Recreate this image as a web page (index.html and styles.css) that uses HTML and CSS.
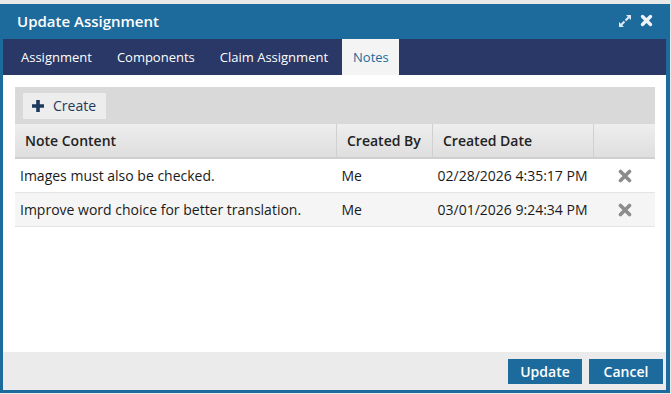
FILE: index.html
```html
<!DOCTYPE html>
<html>
  <head>
    <meta charset="utf-8">
    <title>Update Assignment</title>
    <link rel="stylesheet" href="styles.css">
  </head>
  <body>
    <div class="dialog">
      <div class="titlebar">
        <span class="title">Update Assignment</span>
        <span class="actions">
          <svg class="maximize" width="14" height="14" viewBox="0 0 14 14">
            <path d="M8 1h5v5l-1.8-1.8-3 3-1.4-1.4 3-3z M6 13H1V8l1.8 1.8 3-3 1.4 1.4-3 3z" fill="#dfe9f2"/>
          </svg>
          <svg class="close" width="13" height="13" viewBox="0 0 13 13">
            <path d="M2.5 2.5l8 8M10.5 2.5l-8 8" stroke="#eef3f8" stroke-width="3.4" stroke-linecap="round"/>
          </svg>
        </span>
      </div>
      <div class="tabs">
        <span class="tab">Assignment</span>
        <span class="tab">Components</span>
        <span class="tab">Claim Assignment</span>
        <span class="tab active">Notes</span>
      </div>
      <div class="content">
        <div class="toolbar">
          <button class="create">
            <svg width="14" height="14" viewBox="0 0 14 14">
              <path d="M7 1v12M1 7h12" stroke="#1d3a5c" stroke-width="3.6"/>
            </svg>
            Create
          </button>
        </div>
        <table class="grid">
          <thead>
            <tr>
              <th class="col-content">Note Content</th>
              <th class="col-by">Created By</th>
              <th class="col-date">Created Date</th>
              <th class="col-action"></th>
            </tr>
          </thead>
          <tbody>
            <tr>
              <td>Images must also be checked.</td>
              <td>Me</td>
              <td>02/28/2026 4:35:17 PM</td>
              <td class="remove">
                <svg width="14" height="14" viewBox="0 0 14 14">
                  <path d="M2.5 2.5l9 9M11.5 2.5l-9 9" stroke="#8c8c8c" stroke-width="3.6" stroke-linecap="round"/>
                </svg>
              </td>
            </tr>
            <tr class="alt">
              <td>Improve word choice for better translation.</td>
              <td>Me</td>
              <td>03/01/2026 9:24:34 PM</td>
              <td class="remove">
                <svg width="14" height="14" viewBox="0 0 14 14">
                  <path d="M2.5 2.5l9 9M11.5 2.5l-9 9" stroke="#8c8c8c" stroke-width="3.6" stroke-linecap="round"/>
                </svg>
              </td>
            </tr>
          </tbody>
        </table>
      </div>
      <div class="footer">
        <button class="btn">Update</button>
        <button class="btn">Cancel</button>
      </div>
    </div>
  </body>
</html>
```

FILE: styles.css
```css
body {
  margin: 0;
  padding-top: 4px;
  background-color: #e9e9e9;
  font-family: 'Open Sans', 'Noto Sans', sans-serif;
  font-size: 14px;
  color: #1a1a1a;
}

.dialog {
  width: 663px;
  height: 386px;
  border: 3px solid #1c6b9c;
  border-top: 0;
  border-right-width: 4px;
  border-left-width: 3px;
  display: flex;
  flex-direction: column;
  background-color: #fff;
}

.titlebar {
  height: 35px;
  margin: 0 -4px 0 -3px;
  padding: 0 17px 0 17px;
  background-color: #1c6b9c;
  display: flex;
  align-items: center;
  justify-content: space-between;
}

.title {
  color: #fff;
  font-size: 15px;
  font-weight: 600;
  margin-top: -2px;
}

.actions {
  display: flex;
  align-items: center;
  gap: 8px;
  margin-top: -2px;
}

.tabs {
  height: 36px;
  background-color: #293866;
  display: flex;
  padding-left: 6px;
}

.tab {
  color: #fff;
  padding: 0 12px;
  margin-right: 1px;
  line-height: 36px;
  font-size: 13px;
}

.tab.active {
  margin-left: 1px;
  padding: 0 10px 0 11px;
  background-color: #f4f4f4;
  color: #1c6b9c;
}

.content {
  flex: 1;
  padding: 12px 11px 0 12px;
}

.toolbar {
  height: 37px;
  background-color: #d9d9d9;
  display: flex;
  align-items: center;
  padding-left: 8px;
}

.create {
  height: 26px;
  padding: 0 10px 0 8px;
  border: 0;
  background-color: #ededed;
  color: #1d3a5c;
  font-family: inherit;
  font-size: 14px;
  display: flex;
  align-items: center;
  gap: 8px;
}

.grid {
  width: 100%;
  border-collapse: collapse;
}

.grid th {
  height: 33px;
  text-align: left;
  font-weight: 600;
  color: #222;
  padding: 0 10px;
  background: linear-gradient(#eeeeee, #dedede);
  border-left: 1px solid #d0d0d0;
  border-bottom: 2px solid #cfcfcf;
}

.grid th:first-child {
  border-left: 0;
}

.col-content {
  width: 301px;
}

.col-by {
  width: 75px;
}

.col-date {
  width: 140px;
}

.grid td {
  height: 33px;
  padding: 0 5px;
  border-bottom: 1px solid #e4e4e4;
}

.grid tr.alt td {
  background-color: #f5f5f5;
}

.remove {
  text-align: center;
}

.remove svg {
  display: block;
  margin: 0 auto;
  position: relative;
  left: 1px;
}

.footer {
  height: 38px;
  background-color: #ebebeb;
  display: flex;
  justify-content: flex-end;
  align-items: center;
  gap: 7px;
  padding-right: 3px;
}

.btn {
  width: 74px;
  height: 25px;
  border: 0;
  background-color: #1c6b9c;
  color: #fff;
  font-family: inherit;
  font-size: 14px;
  font-weight: 600;
}
```
